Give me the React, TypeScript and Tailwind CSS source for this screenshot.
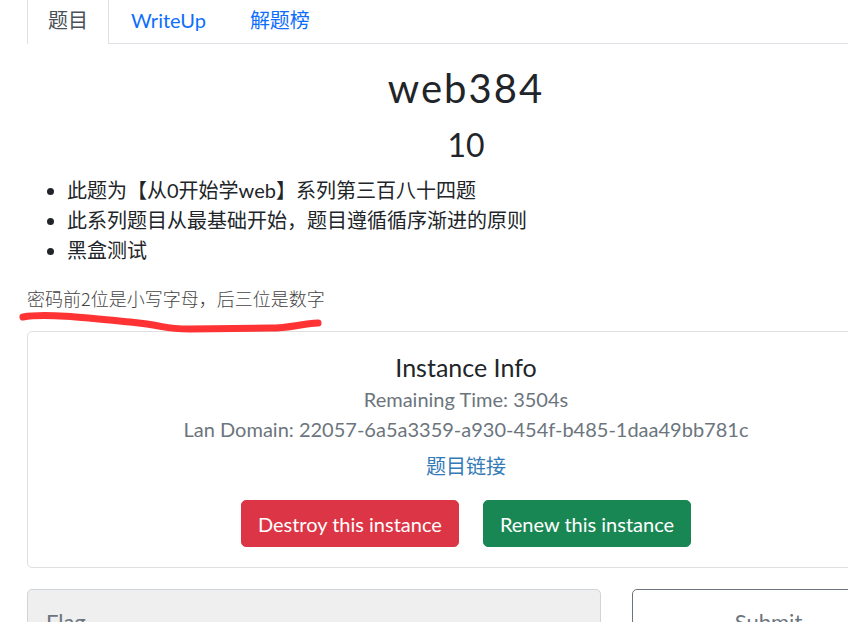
import React from 'react';

const tabs = [
  { label: '题目', active: true },
  { label: 'WriteUp', active: false },
  { label: '解题榜', active: false },
];

const hints = [
  '此题为【从0开始学web】系列第三百八十四题',
  '此系列题目从最基础开始，题目遵循循序渐进的原则',
  '黑盒测试',
];

const App: React.FC = () => {
  return (
    <div className="relative w-[848px] h-[622px] overflow-hidden bg-white font-['Lato','Noto_Sans_CJK_SC',sans-serif] text-[#212529]">
      <div className="ml-[27px] w-[878px]">
        {/* Tabs */}
        <div className="flex h-[44px] border-b border-[#dee2e6]">
          {tabs.map((t) => (
            <div
              key={t.label}
              className={
                t.active
                  ? 'h-[44px] px-5 pt-[5px] text-[20px] leading-[30px] text-[#495057] bg-white border-x border-[#dee2e6]'
                  : 'h-[44px] px-[21px] pt-[5px] text-[20px] leading-[30px] text-[#0d6efd] border-x border-transparent'
              }
            >
              {t.label}
            </div>
          ))}
        </div>

        {/* Title */}
        <h2 className="mt-[20px] text-center text-[40px] leading-[48px] tracking-[2px]">web384</h2>
        <h3 className="mt-[14px] text-center text-[32px] leading-[38px]">10</h3>

        <ul className="mt-[11px] list-disc pl-10 text-[20px] leading-[30px]">
          {hints.map((h) => (
            <li key={h}>{h}</li>
          ))}
        </ul>

        <p className="mt-[20px] text-[18px] leading-[26px] text-[#444] font-light font-['Noto_Sans_CJK_SC',sans-serif]">
          密码前2位是小写字母，后三位是数字
        </p>

        {/* Instance card */}
        <div className="mt-[20px] rounded-[5px] border border-[#dfdfdf] px-6 pt-5 pb-5 text-center">
          <h5 className="text-[25px] leading-[30px]">Instance Info</h5>
          <p className="mt-[2px] text-[20px] leading-[30px] text-[#6c757d]">Remaining Time: 3504s</p>
          <p className="text-[20px] leading-[30px] text-[#6c757d]">
            Lan Domain: 22057-6a5a3359-a930-454f-b485-1daa49bb781c
          </p>
          <div className="mt-[7px] text-[20px] leading-[30px] text-[#337ab7]">题目链接</div>
          <div className="mt-[19px] flex justify-center gap-6">
            <button className="rounded-[5px] border border-[#dc3545] bg-[#dc3545] px-[16px] py-[7.5px] text-[20px] leading-[30px] text-white">
              Destroy this instance
            </button>
            <button className="rounded-[5px] border border-[#198754] bg-[#198754] px-[16px] py-[7.5px] text-[20px] leading-[30px] text-white">
              Renew this instance
            </button>
          </div>
        </div>

        {/* Flag row */}
        <div className="mt-[21px] flex gap-[31px]">
          <div className="h-[60px] w-[574px] rounded-[5px] border border-[#ced4da] bg-[#efefef] px-[18px] pt-[17px] text-[22px] leading-[30px] text-[#6c757d]">
            Flag
          </div>
          <div className="h-[60px] flex-1 rounded-[5px] border border-[#6c757d] pt-[17px] text-center text-[22px] leading-[30px] text-[#6c757d]">
            Submit
          </div>
        </div>
      </div>

      {/* hand-drawn red underline */}
      <svg className="absolute left-0 top-0" width="848" height="622" viewBox="0 0 848 622" fill="none">
        <path
          d="M23 317 C 45 313, 90 318, 130 322 S 160 329, 190 329 L 270 328 C 290 328, 300 324, 318 323"
          stroke="#ff3333"
          strokeWidth="7"
          strokeLinecap="round"
          strokeLinejoin="round"
        />
      </svg>
    </div>
  );
};

export default App;
